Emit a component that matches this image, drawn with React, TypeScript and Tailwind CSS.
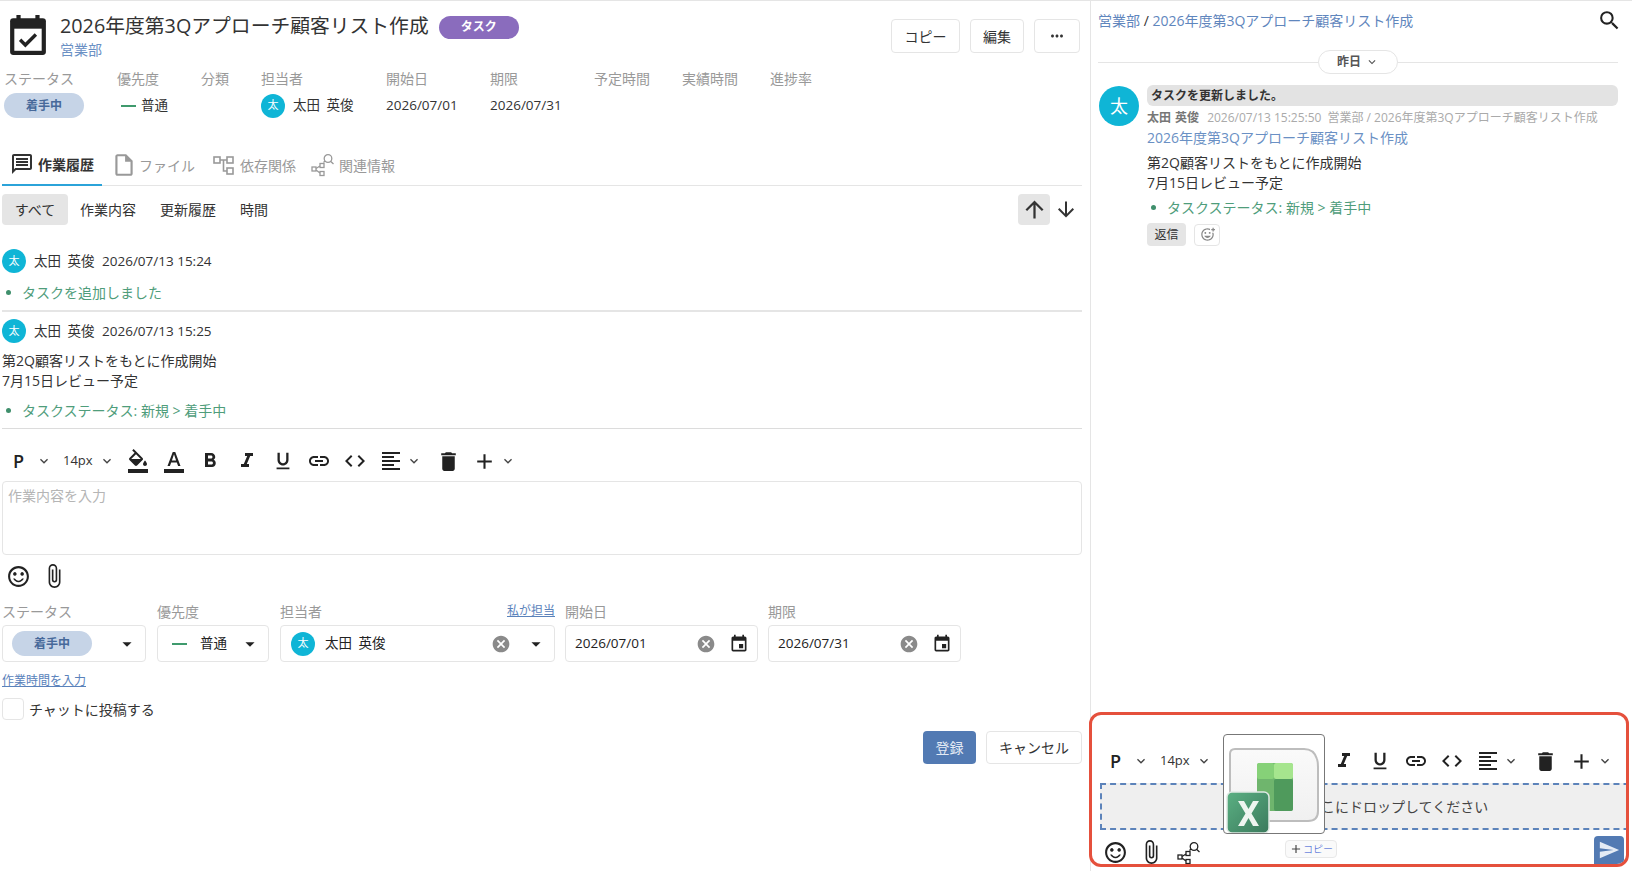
import React, { FC, ReactNode } from 'react';
import {
  MdOutlineMessage, MdOutlineInsertDriveFile, MdArrowUpward, MdArrowDownward,
  MdFormatColorFill, MdFormatColorText, MdFormatBold, MdFormatItalic, MdFormatUnderlined, MdLink, MdCode,
  MdFormatAlignLeft, MdDelete, MdAdd, MdExpandMore, MdSearch, MdSentimentSatisfiedAlt, MdAttachFile,
  MdCancel, MdArrowDropDown, MdEvent, MdSend, MdMoreHoriz, MdOutlineAddReaction,
} from 'react-icons/md';

const TITLE = '2026年度第3Qアプローチ顧客リスト作成';

const Avatar: FC<{ size?: string }> = ({ size = 'w-6 h-6 text-[11px]' }) => (
  <span className={`flex shrink-0 items-center justify-center rounded-full bg-[#0fb5d6] text-white ${size}`}>太</span>
);

const TaskIcon = () => (
  <svg width="36" height="40" viewBox="0 0 34 38" className="shrink-0">
    <rect x="6" y="0" width="4" height="7" fill="#222" />
    <rect x="24" y="0" width="4" height="7" fill="#222" />
    <rect x="0" y="3" width="34" height="35" rx="3" fill="#222" />
    <rect x="4" y="13" width="26" height="21" fill="#fff" />
    <path d="M9.500 23.500l5 5 10-10" fill="none" stroke="#222" strokeWidth="3.200" />
  </svg>
);

const DependIcon = () => (
  <svg width="22" height="22" viewBox="0 0 22 22" fill="none" stroke="currentColor" strokeWidth="1.6">
    <rect x="1" y="3" width="6" height="6" />
    <rect x="14" y="3" width="6" height="6" />
    <rect x="14" y="14" width="6" height="6" />
    <path d="M7 6h7M10.500 6v11H14" />
  </svg>
);

const RelationIcon: FC<{ px?: number }> = ({ px = 24 }) => (
  <svg width={px} height={px} viewBox="0 0 24 24" fill="none" stroke="currentColor" strokeWidth="1.3">
    <rect x="1" y="14" width="4" height="4" />
    <rect x="9" y="10.500" width="4" height="4" />
    <rect x="9" y="18.500" width="4" height="4" />
    <path d="M5 15.500 9 13M5 17 9 20" />
    <circle cx="17" cy="5.500" r="3.800" />
    <path d="M19.800 8.500l2.700 2.500M12.500 9.500 14 8" />
  </svg>
);

const Chev = () => <MdExpandMore size={16} className="text-[#444]" />;

const Toolbar = () => (
  <div className="flex h-9 items-center text-[#222]">
    <span className="w-[24px] pl-[7px] text-[18px] font-semibold">P</span>
    <span className="flex w-[18px] justify-center ml-[5px]"><Chev /></span>
    <span className="ml-[10px] w-[30px] text-[13px] text-[#333]">14px</span>
    <span className="flex w-[18px] justify-center ml-[5px]"><Chev /></span>
    <span className="ml-[4px] flex w-[36px] justify-center"><MdFormatColorFill size={24} /></span>
    <span className="flex w-[36px] justify-center"><MdFormatColorText size={24} /></span>
    <span className="flex w-[36px] justify-center"><MdFormatBold size={24} /></span>
    <span className="flex w-[37px] justify-center"><MdFormatItalic size={24} /></span>
    <span className="flex w-[36px] justify-center"><MdFormatUnderlined size={22} /></span>
    <span className="flex w-[36px] justify-center"><MdLink size={24} /></span>
    <span className="flex w-[36px] justify-center"><MdCode size={24} /></span>
    <span className="flex w-[36px] justify-center"><MdFormatAlignLeft size={24} /></span>
    <span className="flex w-[16px] justify-center -ml-[3px]"><Chev /></span>
    <span className="flex w-[36px] justify-center ml-[8px]"><MdDelete size={25} /></span>
    <span className="flex w-[36px] justify-center"><MdAdd size={25} /></span>
    <span className="flex w-[16px] justify-center -ml-[2px]"><Chev /></span>
  </div>
);

const Bullet: FC<{ children: ReactNode }> = ({ children }) => (
  <div className="flex items-center text-[14px] text-[#4f9d7b]">
    <span className="ml-[4px] mr-[11px] h-[5px] w-[5px] rounded-full bg-[#3f8f6c]" />
    {children}
  </div>
);

const Field: FC<{ label: string; width: string; children: ReactNode; extra?: ReactNode }> = ({ label, width, children, extra }) => (
  <div className={width}>
    <div className="flex h-5 items-center justify-between text-[14px] text-[#999]">
      <span>{label}</span>
      {extra}
    </div>
    <div className="mt-1 flex h-[37px] items-center rounded border border-[#e5e5e5] bg-white text-[13.5px] text-[#222]">
      {children}
    </div>
  </div>
);

const DateField: FC<{ label: string; value: string }> = ({ label, value }) => (
  <Field label={label} width="w-[193px]">
    <span className="ml-[9px] flex-1">{value}</span>
    <MdCancel size={20} className="text-[#8a8a8a]" />
    <MdEvent size={20} className="ml-[13px] mr-[8px] text-[#222]" />
  </Field>
);

const HistoryHead: FC<{ time: string }> = ({ time }) => (
  <div className="flex h-6 items-center text-[13.5px] text-[#333]">
    <Avatar />
    <span className="ml-2 w-[68px] [word-spacing:3px]">太田 英俊</span>
    <span>{time}</span>
  </div>
);

const ExcelDrag = () => (
  <div className="absolute left-[131px] top-[19px] h-[100px] w-[102px] rounded border border-[#777] bg-white">
    <svg width="100" height="98" viewBox="0 0 100 98" className="blur-[0.5px]">
      <defs>
        <linearGradient id="sheet" x1="0" y1="0" x2="0" y2="1">
          <stop offset="0" stopColor="#fafafa" />
          <stop offset="1" stopColor="#f0f0f0" />
        </linearGradient>
        <linearGradient id="badge" x1="0" y1="0" x2="1" y2="1">
          <stop offset="0" stopColor="#5bb083" />
          <stop offset="1" stopColor="#3a7a5c" />
        </linearGradient>
      </defs>
      <path d="M11 14h69q10 0 13 10 1 3 1 8v44q0 10-10 10H11q-5 0-5-5V19q0-5 5-5z" fill="url(#sheet)" stroke="#bdbdbd" strokeWidth="2" />
      <rect x="33" y="28" width="36" height="48" rx="3" fill="#6fb56d" />
      <rect x="50" y="28" width="19" height="16" rx="2" fill="#a6e58e" />
      <rect x="33" y="28" width="17" height="16" rx="2" fill="#86d178" />
      <rect x="50" y="44" width="19" height="32" rx="2" fill="#4f9a5c" />
      <rect x="3" y="57" width="42" height="41" rx="5" fill="url(#badge)" stroke="#dfe9e3" strokeWidth="1.500" />
      <path d="M14 66h6l4.500 8 4.500-8h6l-7.500 12.500L35 91h-6l-4.500-8-4.500 8h-6l7.500-12.500z" fill="#eef5f0" />
    </svg>
  </div>
);

const App = () => {
  return (
    <div className="flex h-[871px] w-[1632px] overflow-hidden border-t border-[#e5e5e5] bg-white text-[14px] text-[#333] [font-family:'Open_Sans','Noto_Sans_CJK_JP',sans-serif]">
      {/* left: task detail */}
      <div className="w-[1090px] shrink-0 pl-[2px] pr-[8px]">
        <div className="flex h-[66px] pt-[14px] -ml-[2px] pl-[10px]">
          <TaskIcon />
          <div className="ml-[14px] -mt-[3px]">
            <div className="flex items-center">
              <span className="text-[19.800px] leading-[28px] text-[#333]">{TITLE}</span>
              <span className="ml-[10px] mt-[2px] flex h-[23px] w-[80px] items-center justify-center rounded-full bg-[#8a6cbd] text-[12px] font-bold text-white">タスク</span>
            </div>
            <div className="text-[14px] leading-[20px] text-[#6a90c4]">営業部</div>
          </div>
          <div className="ml-auto mr-[2px] mt-[4px] flex gap-[10px]">
            <button className="h-[34px] w-[69px] rounded border border-[#e5e5e5]">コピー</button>
            <button className="h-[34px] w-[54px] rounded border border-[#e5e5e5]">編集</button>
            <button className="flex h-[34px] w-[46px] items-center justify-center rounded border border-[#e5e5e5]"><MdMoreHoriz size={18} /></button>
          </div>
        </div>

        <div className="h-[61px] -ml-[2px] pl-[4px]">
          <div className="flex h-[22px] items-center text-[14px] text-[#999]">
            <span className="w-[113px]">ステータス</span>
            <span className="w-[84px]">優先度</span>
            <span className="w-[60px]">分類</span>
            <span className="w-[125px]">担当者</span>
            <span className="w-[104px]">開始日</span>
            <span className="w-[104px]">期限</span>
            <span className="w-[88px]">予定時間</span>
            <span className="w-[88px]">実績時間</span>
            <span>進捗率</span>
          </div>
          <div className="mt-[4px] flex h-[25px] items-center text-[13.500px]">
            <span className="flex h-[25px] w-[80px] items-center justify-center rounded-full bg-[#c6d4e7] text-[12px] font-bold text-[#47699a]">着手中</span>
            <span className="ml-[37px] h-[2px] w-[15px] bg-[#3f9a6d]" />
            <span className="ml-[5px] w-[120px]">普通</span>
            <Avatar />
            <span className="ml-2 w-[93px] [word-spacing:3px]">太田 英俊</span>
            <span className="w-[104px]">2026/07/01</span>
            <span>2026/07/31</span>
          </div>
        </div>

        <div className="flex h-[58px] items-end border-b border-[#e5e5e5] text-[#999]">
          <div className="-mb-px flex h-[38px] w-[100px] items-center border-b-2 border-[#2ba3d9] pb-[4px] pl-[8px] font-bold text-[#333]">
            <MdOutlineMessage size={24} className="mr-[4px] shrink-0" />作業履歴
          </div>
          <div className="flex h-[38px] w-[101px] items-center pb-[2px] pl-[9px]">
            <MdOutlineInsertDriveFile size={26} className="mr-[2px] shrink-0" />ファイル
          </div>
          <div className="flex h-[38px] w-[100px] items-center pb-[2px] pl-[10px]">
            <span className="mr-[5px] shrink-0"><DependIcon /></span>依存関係
          </div>
          <div className="flex h-[38px] items-center pb-[2px] pl-[8px]">
            <span className="mr-[4px] shrink-0"><RelationIcon /></span>関連情報
          </div>
        </div>

        <div className="mt-[8px] flex h-[31px] items-center">
          <span className="flex h-[31px] w-[66px] items-center justify-center rounded bg-[#e5e5e5]">すべて</span>
          <span className="ml-3">作業内容</span>
          <span className="ml-6">更新履歴</span>
          <span className="ml-6">時間</span>
          <span className="ml-auto flex h-[31px] w-8 items-center justify-center rounded bg-[#e5e5e5]"><MdArrowUpward size={27} /></span>
          <span className="ml-1 mr-[4px] flex w-[24px] justify-center"><MdArrowDownward size={27} /></span>
        </div>

        <div className="mt-[24px]"><HistoryHead time="2026/07/13 15:24" /></div>
        <div className="mt-[9px] h-5"><Bullet>タスクを追加しました</Bullet></div>
        <div className="mt-2 h-[2px] bg-[#e5e5e5]" />
        <div className="mt-[7px]"><HistoryHead time="2026/07/13 15:25" /></div>
        <div className="mt-2 text-[14px] leading-5">第2Q顧客リストをもとに作成開始<br />7月15日レビュー予定</div>
        <div className="mt-[9px] h-5"><Bullet>タスクステータス: 新規 &gt; 着手中</Bullet></div>
        <div className="mt-2 h-px bg-[#dcdcdc]" />

        <div className="mt-[14px] pl-[4px]"><Toolbar /></div>
        <div className="mt-[2px] h-[74px] rounded border border-[#e5e5e5] px-[5px] py-[3px] text-[14px] text-[#b5b5b5]">作業内容を入力</div>
        <div className="mt-[9px] flex h-6 items-center pl-[4px] text-[#222]">
          <MdSentimentSatisfiedAlt size={25} />
          <MdAttachFile size={26} className="ml-[10px]" />
        </div>

        <div className="mt-[13px] flex gap-[11px] pr-[121px]">
          <Field label="ステータス" width="w-[144px]">
            <span className="ml-[9px] flex h-[25px] w-[80px] items-center justify-center rounded-full bg-[#c6d4e7] text-[12px] font-bold text-[#47699a]">着手中</span>
            <MdArrowDropDown size={22} className="ml-auto mr-[7px] text-[#222]" />
          </Field>
          <Field label="優先度" width="w-[112px]">
            <span className="ml-[14px] h-[2px] w-[15px] bg-[#3f9a6d]" />
            <span className="ml-[13px]">普通</span>
            <MdArrowDropDown size={22} className="ml-auto mr-[7px] text-[#222]" />
          </Field>
          <Field label="担当者" width="w-[275px]" extra={<span className="text-[12px] text-[#5a82bb] underline">私が担当</span>}>
            <span className="ml-[10px]"><Avatar /></span>
            <span className="ml-[10px] [word-spacing:3px]">太田 英俊</span>
            <MdCancel size={20} className="ml-auto text-[#8a8a8a]" />
            <MdArrowDropDown size={22} className="ml-[14px] mr-[7px] text-[#222]" />
          </Field>
          <div className="-ml-px flex gap-[10px]">
            <DateField label="開始日" value="2026/07/01" />
            <DateField label="期限" value="2026/07/31" />
          </div>
        </div>

        <div className="mt-[9px] flex h-5 items-center text-[12px] text-[#5a82bb] underline">作業時間を入力</div>
        <div className="mt-[7px] flex h-[22px] items-center">
          <span className="h-[22px] w-[22px] rounded-sm border border-[#e5e5e5]" />
          <span className="ml-[5px]">チャットに投稿する</span>
        </div>
        <div className="mt-[11px] flex justify-end gap-[10px]">
          <button className="h-[33px] w-[53px] rounded bg-[#527ab3] text-[14px] text-[#e4ebf5]">登録</button>
          <button className="h-[33px] w-[96px] rounded border border-[#e5e5e5]">キャンセル</button>
        </div>
      </div>

      {/* right: chat */}
      <div className="flex min-w-0 flex-1 flex-col border-l border-[#e5e5e5]">
        <div className="flex h-[39px] items-center justify-between pl-[7px] pr-[10px] text-[14px] text-[#5f86bd]">
          <span>営業部 <span className="text-[#333]">/</span> {TITLE}</span>
          <MdSearch size={25} className="text-[#222]" />
        </div>
        <div className="ml-[7px] mr-[14px] mt-[10px] flex h-6 items-center">
          <span className="h-px flex-1 bg-[#e5e5e5]" />
          <span className="flex h-6 w-[80px] items-center justify-center rounded-full border border-[#e5e5e5] text-[12px] font-semibold text-[#555]">昨日<MdExpandMore size={14} className="ml-1" /></span>
          <span className="h-px flex-1 bg-[#e5e5e5]" />
        </div>
        <div className="mt-[11px] flex pl-[8px] pr-[14px]">
          <Avatar size="w-10 h-10 text-[18px] mt-px" />
          <div className="ml-[8px] flex-1">
            <div className="flex h-[21px] items-center rounded-md bg-[#e3e3e3] pl-1 text-[12px] font-bold leading-none">タスクを更新しました。</div>
            <div className="mt-[2px] flex h-[20px] items-center whitespace-nowrap text-[12px] text-[#aaa]">
              <span className="mr-2 font-bold text-[#777] [word-spacing:1px]">太田 英俊</span>
              <span className="mr-[6px]">2026/07/13 15:25:50</span>
              <span>営業部 / {TITLE}</span>
            </div>
            <div className="h-5 text-[14px] leading-5 text-[#6a90c4]">{TITLE}</div>
            <div className="mt-[5px] text-[14px] leading-5">第2Q顧客リストをもとに作成開始<br />7月15日レビュー予定</div>
            <div className="mt-[4px] h-5"><Bullet>タスクステータス: 新規 &gt; 着手中</Bullet></div>
            <div className="mt-[6px] flex items-center gap-2">
              <span className="flex h-[23px] w-[39px] items-center justify-center rounded bg-[#e5e5e5] text-[12px]">返信</span>
              <span className="flex h-[22px] w-[26px] items-center justify-center rounded border border-[#e5e5e5] text-[#888]"><MdOutlineAddReaction size={15} /></span>
            </div>
          </div>
        </div>

        {/* composer */}
        <div className="relative mb-[4px] -ml-[2px] mr-[3px] mt-auto h-[155px] overflow-hidden rounded-xl border-[3px] border-[#e5503c] pt-[28px]">
          <div className="pl-[11px]"><Toolbar /></div>
          <div className="ml-[8px] mt-[4px] flex h-[47px] w-[600px] items-center border-2 border-dashed border-[#5c83ba] bg-[#efefef] pl-[205px] text-[14px] text-[#444]">ここにドロップしてください</div>
          <div className="mt-[10px] flex h-6 items-center pl-[11px] text-[#222]">
            <MdSentimentSatisfiedAlt size={25} />
            <MdAttachFile size={26} className="ml-[10px]" />
            <span className="ml-[13px] mt-[2px]"><RelationIcon px={24} /></span>
          </div>
          <span className="absolute bottom-0 right-[2px] flex h-[28px] w-[30px] items-center justify-center rounded-t-sm bg-[#527ab3] text-[#e4ebf5]"><MdSend size={22} /></span>
          <ExcelDrag />
          <span className="absolute left-[193px] top-[125px] flex h-[18px] w-[52px] items-center justify-center rounded-sm border border-[#e8e8e8] bg-[#fafafa] text-[10px] font-light text-[#2a4fd0]"><MdAdd size={14} className="text-[#444]" />コピー</span>
        </div>
      </div>
    </div>
  );
};

export default App;
